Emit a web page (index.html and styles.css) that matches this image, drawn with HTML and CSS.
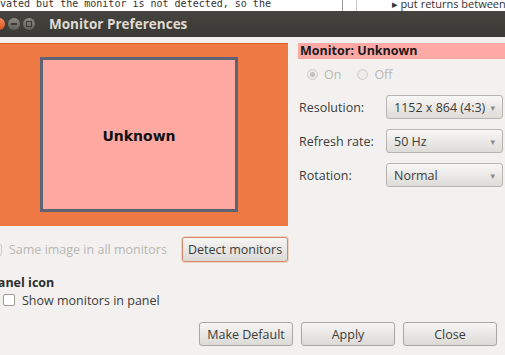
FILE: index.html
```html
<!DOCTYPE html>
<html lang="en">
<head>
    <meta charset="UTF-8">
    <title>Monitor Preferences</title>
    <link rel="stylesheet" href="styles.css">
</head>
<body>

<div class="terminal">
    <div class="terminal__text">vated but the monitor is not detected, so the</div>
    <div class="terminal__rule terminal__rule--a"></div>
    <div class="terminal__rule terminal__rule--b"></div>
    <div class="terminal__side">&#9656; put returns between</div>
</div>

<div class="titlebar">
    <div class="titlebar__buttons">
        <span class="titlebar__btn titlebar__btn--close"></span>
        <span class="titlebar__btn"><i class="titlebar__dash"></i></span>
        <span class="titlebar__btn"><i class="titlebar__square"></i></span>
    </div>
    <div class="titlebar__title">Monitor Preferences</div>
</div>

<div class="dialog">
    <div class="dialog__main">
        <div class="canvas">
            <div class="canvas__monitor">Unknown</div>
        </div>
        <div class="props">
            <div class="props__heading">Monitor: Unknown</div>
            <div class="props__radios">
                <label class="radio"><span class="radio__dot radio__dot--on"></span>On</label>
                <label class="radio"><span class="radio__dot"></span>Off</label>
            </div>
            <div class="props__row">
                <span class="props__label">Resolution:</span>
                <div class="combo">1152 x 864 (4:3)<span class="combo__arrow">&#9662;</span></div>
            </div>
            <div class="props__row">
                <span class="props__label">Refresh rate:</span>
                <div class="combo">50 Hz<span class="combo__arrow">&#9662;</span></div>
            </div>
            <div class="props__row">
                <span class="props__label">Rotation:</span>
                <div class="combo">Normal<span class="combo__arrow">&#9662;</span></div>
            </div>
        </div>
    </div>

    <div class="dialog__mirror">
        <label class="check check--disabled"><span class="check__box"></span>Same image in all monitors</label>
        <button class="button button--focus">Detect monitors</button>
    </div>

    <div class="panel">
        <div class="panel__heading">Panel icon</div>
        <label class="check"><span class="check__box"></span>Show monitors in panel</label>
    </div>

    <div class="dialog__actions">
        <button class="button button--wide">Make Default</button>
        <button class="button button--wide">Apply</button>
        <button class="button button--wide">Close</button>
    </div>
</div>

</body>
</html>
```

FILE: styles.css
```css
* {
    box-sizing: border-box;
    margin: 0;
    padding: 0;
}

body {
    background: #f2f1f0;
    font-family: "Open Sans", "DejaVu Sans", sans-serif;
    font-size: 12.5px;
    color: #3c3c3c;
    width: 505px;
    height: 355px;
    overflow: hidden;
}

/* terminal peeking above the window */
.terminal {
    height: 11px;
    background: #fff;
    position: relative;
    overflow: hidden;
}
.terminal__text {
    font-family: "DejaVu Sans Mono", monospace;
    font-size: 10px;
    line-height: 12px;
    color: #333;
    margin-top: -2px;
    white-space: nowrap;
}
.terminal__rule {
    position: absolute;
    top: 0;
    bottom: 0;
    width: 1px;
    background: #9a9a9a;
}
.terminal__rule--a { left: 342px; }
.terminal__rule--b { left: 356px; background: #c8c8c8; }
.terminal__side {
    position: absolute;
    left: 392px;
    top: -2px;
    font-size: 11px;
    line-height: 12px;
    color: #333;
    white-space: nowrap;
}

/* window title */
.titlebar {
    height: 26px;
    background: linear-gradient(#45443f, #3a3935);
    display: flex;
    align-items: center;
}
.titlebar__buttons {
    display: flex;
    gap: 3px;
    margin-left: -7px;
}
.titlebar__btn {
    width: 12px;
    height: 12px;
    border-radius: 50%;
    background: linear-gradient(#8b8a85, #5e5d58);
    display: flex;
    align-items: center;
    justify-content: center;
}
.titlebar__btn--close {
    background: linear-gradient(#f58d5c, #d9531d);
}
.titlebar__dash {
    width: 6px;
    height: 2px;
    background: #3b3a36;
}
.titlebar__square {
    width: 6px;
    height: 6px;
    border: 1px solid #3b3a36;
}
.titlebar__title {
    margin-left: 14px;
    color: #dfdbd2;
    font-weight: bold;
    font-size: 13.5px;
}

/* dialog body */
.dialog {
    margin-left: -10px;
    padding-top: 6px;
}
.dialog__main {
    display: flex;
    gap: 10px;
}

.canvas {
    width: 298px;
    height: 183px;
    background: #ee7944;
    border-top: 1px solid #d9602c;
    padding: 13px 0 0 50px;
    flex: none;
}
.canvas__monitor {
    width: 198px;
    height: 155px;
    background: #fea8a2;
    border: 3px solid #5e6273;
    display: flex;
    align-items: center;
    justify-content: center;
    color: #111;
    font-family: "DejaVu Sans", sans-serif;
    font-weight: bold;
    font-size: 14px;
    padding-top: 2px;
}

.props {
    flex: 1;
    min-width: 230px;
}
.props__heading {
    background: #ffa9a7;
    color: #1a1a1a;
    font-weight: bold;
    height: 16px;
    line-height: 16px;
    padding-left: 2px;
}
.props__radios {
    display: flex;
    gap: 16px;
    padding: 7px 0 0 9px;
    height: 36px;
    color: #b9b7b2;
}
.radio {
    display: flex;
    align-items: center;
    gap: 6px;
    height: 17px;
}
.radio__dot {
    width: 11px;
    height: 11px;
    border-radius: 50%;
    border: 1px solid #cfcdc9;
    background: #ecebe9;
    display: flex;
    align-items: center;
    justify-content: center;
}
.radio__dot--on::after {
    content: "";
    width: 5px;
    height: 5px;
    border-radius: 50%;
    background: #c3c1bd;
}

.props__row {
    display: flex;
    align-items: center;
    height: 24px;
    margin-bottom: 10px;
    padding-left: 1px;
}
.props__label {
    width: 87px;
}
.combo {
    width: 117px;
    height: 100%;
    border: 1px solid #b7b5b0;
    border-radius: 3px;
    background: linear-gradient(#f7f7f6, #dedcd8);
    display: flex;
    align-items: center;
    padding: 0 0 0 7px;
    color: #3c3c3c;
    white-space: nowrap;
}
.combo__arrow {
    margin-left: auto;
    margin-right: 7px;
    font-size: 9px;
    color: #8e8c87;
}

.dialog__mirror {
    display: flex;
    align-items: center;
    justify-content: space-between;
    width: 298px;
    margin-top: 11px;
    height: 25px;
}

.check {
    display: flex;
    align-items: center;
    gap: 7px;
    white-space: nowrap;
}
.check--disabled {
    color: #b9b7b2;
}
.check__box {
    width: 12px;
    height: 12px;
    border: 1px solid #9e9c97;
    border-radius: 2px;
    background: #fff;
}
.check--disabled .check__box {
    border-color: #cfcdc9;
    background: #eeedeb;
}

.button {
    font-family: inherit;
    font-size: 12.5px;
    color: #3c3c3c;
    height: 25px;
    padding: 0;
    white-space: nowrap;
    border: 1px solid #a9a7a2;
    border-radius: 3px;
    background: linear-gradient(#f5f5f4, #dcdad6);
}
.button--focus {
    width: 106px;
    border-color: #d6896a;
    box-shadow: 0 0 0 1px #f3d2c4;
}

.panel {
    margin-top: 13px;
}
.panel__heading {
    font-weight: bold;
    color: #2e2e2e;
    height: 16px;
    line-height: 16px;
}
.panel .check {
    margin: 1px 0 0 13px;
    height: 16px;
}

.dialog__actions {
    display: flex;
    justify-content: flex-end;
    gap: 8px;
    padding-right: 8px;
    margin-top: 14px;
}
.button--wide {
    width: 94px;
    height: 24px;
}
```
